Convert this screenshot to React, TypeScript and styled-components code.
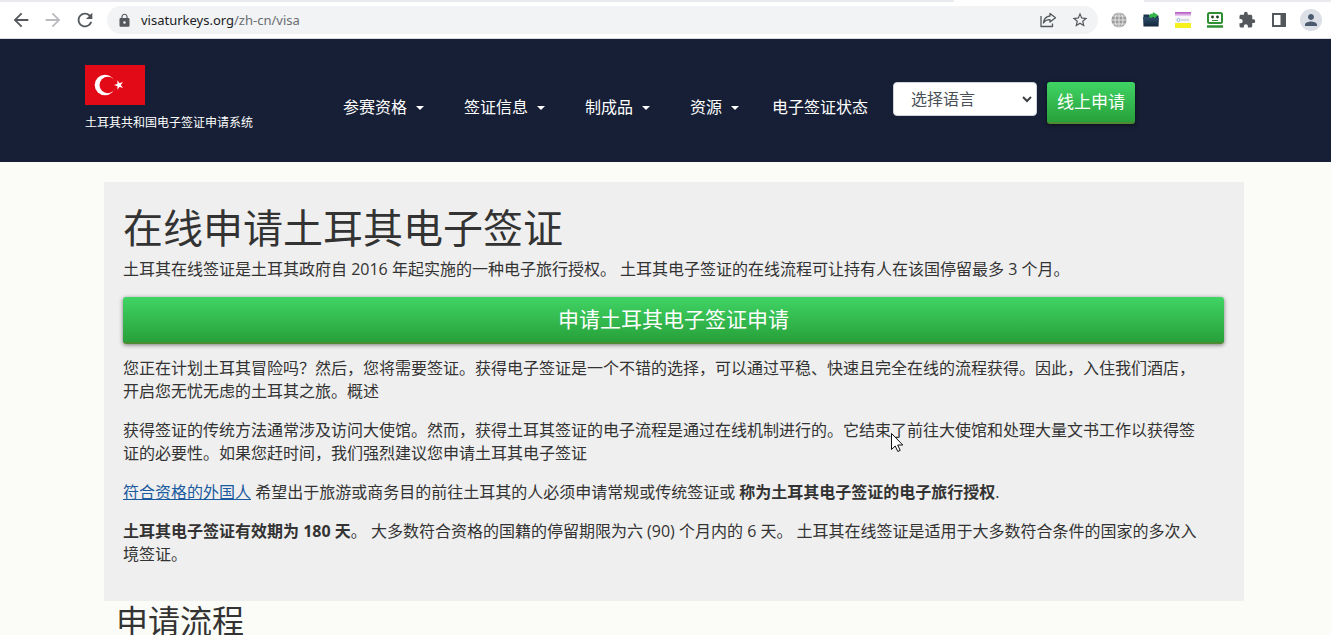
import React from "react";
import styled, { createGlobalStyle } from "styled-components";
import { MdArrowBack, MdArrowForward, MdExtension, MdLock, MdPerson, MdRefresh, MdStarBorder } from "react-icons/md";

const GlobalStyle = createGlobalStyle`
  *, *::before, *::after { box-sizing: border-box; }
  html, body { margin: 0; height: 100%; }
  #root { height: 100%; }
  body {
    background: #fbfcf8;
    color: #333;
    font: 16px/23px "Open Sans", "Noto Sans CJK SC", sans-serif;
    overflow: hidden;
  }
  h1, h2, p { margin: 0; font-weight: 400; }
`;

const Page = styled.div`
  position: relative;
  height: 100%;
  overflow: hidden;
`;

const TabStrip = styled.div`
  display: grid;
  grid-template-columns: 954fr 190fr 187fr;
  height: 2px;
  background: #e8eaed;
`;

const ActiveTab = styled.div`
  grid-column: 2;
  background: #fff;
`;

const Toolbar = styled.div`
  display: flex;
  align-items: center;
  height: 37px;
  padding: 0 4px 0 10px;
  background: #fff;
  border-bottom: 1px solid #dadce0;
`;

const IconButton = styled.button<{ $muted?: boolean }>`
  display: grid;
  place-items: center;
  width: 32px;
  height: 28px;
  flex: none;
  padding: 0;
  border: 0;
  background: none;
  color: ${(p) => (p.$muted ? "#b9bbbe" : "#54575b")};
`;

const NavButtons = styled.div`
  display: flex;
  margin-left: -5px;
`;

const AddressBar = styled.div`
  display: flex;
  align-items: center;
  flex: 1;
  height: 28px;
  margin: 0 5px 0 6px;
  padding: 0 2px 0 10px;
  border-radius: 14px;
  background: #f1f3f4;
  color: #55585c;
`;

const Url = styled.a`
  flex: 1;
  margin-left: 9px;
  color: #6a6d71;
  font-family: "Noto Sans", sans-serif;
  font-size: 13px;
  line-height: 20px;
  text-decoration: none;
  span { color: #202124; }
`;

const Avatar = styled.span`
  display: grid;
  place-items: center;
  width: 22px;
  height: 22px;
  border-radius: 50%;
  background: #dcdfe6;
  color: #4c5a70;
`;

const SiteHeader = styled.header`
  display: flex;
  align-items: flex-start;
  height: 123px;
  padding: 26px 85px 0;
  background: #161f36;
  color: #fff;
`;

const Brand = styled.a`
  display: flex;
  flex-direction: column;
  gap: 9px;
  width: 258px;
  flex: none;
  color: #fff;
  font-size: 12px;
  line-height: 18px;
  text-decoration: none;
  svg { display: block; }
`;

const Menu = styled.nav`
  display: flex;
  gap: 40px;
  margin-top: 31px;
`;

const MenuButton = styled.button`
  display: flex;
  align-items: center;
  gap: 9px;
  padding: 0;
  border: 0;
  background: none;
  color: #fff;
  font: inherit;
  white-space: nowrap;
  &::after {
    content: "";
    border: 4px solid transparent;
    border-top-color: #fff;
    border-bottom: 0;
  }
`;

const MenuLink = styled.a`
  margin-left: -7px;
  color: #fff;
  text-decoration: none;
  white-space: nowrap;
`;

const Actions = styled.div`
  display: flex;
  align-items: flex-start;
  gap: 10px;
  margin: 17px 0 0 25px;
`;

const SelectBox = styled.div`
  position: relative;
  svg {
    position: absolute;
    top: 14px;
    right: 5px;
    pointer-events: none;
  }
`;

const LanguageSelect = styled.select`
  appearance: none;
  display: block;
  width: 144px;
  height: 34px;
  padding: 0 24px 0 17px;
  border: 1px solid #ced4da;
  border-radius: 4px;
  background: #fff;
  color: #495057;
  font: inherit;
`;

const GreenLink = styled.a<{ $large?: boolean }>`
  display: block;
  padding: ${(p) => (p.$large ? "11px" : "9px 10px 10px")};
  border-bottom: 2px solid #4d8a31;
  border-radius: 3px;
  background: linear-gradient(#40d465, #28a03a);
  box-shadow: 0 1px 4px rgba(0, 0, 0, 0.5);
  color: #fff;
  font-size: ${(p) => (p.$large ? "21px" : "17px")};
  line-height: ${(p) => (p.$large ? "23px" : "21px")};
  text-align: center;
  text-decoration: none;
  white-space: nowrap;
`;

const Main = styled.main`
  padding: 20px 87px 0 104px;
`;

const Card = styled.section`
  padding: 20px 20px 35px 19px;
  background: #efefef;
`;

const Title = styled.h1`
  margin-bottom: 4px;
  font-size: 40px;
  line-height: 52px;
`;

const Intro = styled.div`
  margin-bottom: 16px;
`;

const Article = styled.div`
  display: flex;
  flex-direction: column;
  gap: 16px;
  margin-top: 13px;
`;

const Paragraph = styled.p`
  padding-right: 16px;
  a { color: #1a5a9e; }
  b { font-weight: 700; }
`;

const SectionTitle = styled.h2`
  padding-left: 12px;
  font-size: 32px;
  line-height: 40px;
`;

const Pointer = styled.svg`
  position: absolute;
  left: 890px;
  top: 432px;
`;

const ShareIcon = () => (
  <svg width="18" height="18" viewBox="0 0 18 18" fill="none" stroke="#54575b" strokeWidth="1.3" strokeLinejoin="round">
    <path d="M2 5v10.500h11.500V12.500" />
    <path d="M11 2.500l5.500 4.300-5.500 4.300V8.700C8 8.600 6 9.600 4.500 12c.4-4 2.700-6.600 6.500-7z" />
  </svg>
);

const GlobeIcon = () => (
  <svg width="16" height="16" viewBox="0 0 16 16">
    <circle cx="8" cy="8" r="7.600" fill="#9c9c9c" />
    <g fill="none" stroke="#f2f2f2" strokeWidth="0.800">
      <path d="M8 0v16M0 8h16M1.500 4h13M1.500 12h13" />
      <ellipse cx="8" cy="8" rx="4" ry="7.600" />
    </g>
  </svg>
);

const FolderIcon = () => (
  <svg width="16" height="16" viewBox="0 0 16 16">
    <defs>
      <linearGradient id="folder" x2="0" y2="1">
        <stop stopColor="#31506e" />
        <stop offset="1" stopColor="#14253b" />
      </linearGradient>
    </defs>
    <path d="M0.500 2.500h5.500l1 1h8.500V7H0.500z" fill="#1d344d" />
    <path d="M6 5c0-2.500 1.500-3.500 4-3.500V0L15 3l-4 4V5C9.500 4.800 8.500 5.500 8 7z" fill="#35b54a" />
    <path d="M0 5h6.500L8 6h8l-0.500 8.500H0.500z" fill="url(#folder)" />
  </svg>
);

const NoteIcon = () => (
  <svg width="16" height="16" viewBox="0 0 16 16">
    <defs>
      <linearGradient id="noteTop" x2="0" y2="1">
        <stop stopColor="#b14fc0" />
        <stop offset="1" stopColor="#efd8f3" />
      </linearGradient>
    </defs>
    <rect width="16" height="16" fill="#f7f5fa" />
    <rect width="16" height="4" fill="url(#noteTop)" />
    <rect y="11" width="16" height="5" fill="#f6f11c" />
    <circle cx="3.500" cy="8" r="1.500" fill="none" stroke="#8fb4dc" />
    <path d="M6 8h8" stroke="#a9b9cf" />
  </svg>
);

const RobotIcon = () => (
  <svg width="18" height="16" viewBox="0 0 18 16">
    <rect x="2" y="1" width="14" height="10" rx="1.500" fill="#fff" stroke="#2e8f32" strokeWidth="2" />
    <circle cx="6.500" cy="5" r="1.400" fill="#1d3b1f" />
    <circle cx="11.500" cy="5" r="1.400" fill="#1d3b1f" />
    <path d="M6 8.500h6" stroke="#2e8f32" />
    <path d="M1 14.500h16" stroke="#2e8f32" strokeWidth="2.500" />
  </svg>
);

const PanelIcon = () => (
  <svg width="14" height="14" viewBox="0 0 14 14">
    <path d="M0 0h14v14H0zM2 2v10h6.500V2z" fill="#54575b" fillRule="evenodd" />
  </svg>
);

const Flag = () => (
  <svg width="60" height="40" viewBox="0 0 60 40" role="img" aria-label="土耳其国旗">
    <rect width="60" height="40" fill="#e30a17" />
    <circle cx="20" cy="20" r="10.300" fill="#fff" />
    <circle cx="22.800" cy="20" r="8.300" fill="#e30a17" />
    <path d="M29 20l9-2.900-5.600 7.600v-9.400l5.600 7.600z" fill="#fff" />
  </svg>
);

const menus = ["参赛资格", "签证信息", "制成品", "资源"];

export default function App() {
  return (
    <Page lang="zh-CN">
      <GlobalStyle />
      <TabStrip><ActiveTab /></TabStrip>
      <Toolbar>
        <NavButtons>
          <IconButton aria-label="后退"><MdArrowBack size={22} /></IconButton>
          <IconButton aria-label="前进" $muted><MdArrowForward size={22} /></IconButton>
          <IconButton aria-label="重新加载"><MdRefresh size={22} /></IconButton>
        </NavButtons>
        <AddressBar>
          <MdLock size={15} />
          <Url href="#visa"><span>visaturkeys.org</span>/zh-cn/visa</Url>
          <IconButton aria-label="分享"><ShareIcon /></IconButton>
          <IconButton aria-label="收藏"><MdStarBorder size={18} /></IconButton>
        </AddressBar>
        <IconButton aria-label="网络"><GlobeIcon /></IconButton>
        <IconButton aria-label="文件夹"><FolderIcon /></IconButton>
        <IconButton aria-label="便笺"><NoteIcon /></IconButton>
        <IconButton aria-label="密码管理"><RobotIcon /></IconButton>
        <IconButton aria-label="扩展程序"><MdExtension size={18} /></IconButton>
        <IconButton aria-label="侧边栏"><PanelIcon /></IconButton>
        <IconButton aria-label="用户"><Avatar><MdPerson size={18} /></Avatar></IconButton>
      </Toolbar>
      <SiteHeader>
        <Brand href="#home"><Flag />土耳其共和国电子签证申请系统</Brand>
        <Menu>
          {menus.map((label) => <MenuButton key={label}>{label}</MenuButton>)}
          <MenuLink href="#status">电子签证状态</MenuLink>
        </Menu>
        <Actions>
          <SelectBox>
            <LanguageSelect aria-label="选择语言"><option>选择语言</option></LanguageSelect>
            <svg width="10" height="7" viewBox="0 0 10 7" fill="none" stroke="#3c4043" strokeWidth="2">
              <path d="M1 1l4 4 4-4" />
            </svg>
          </SelectBox>
          <GreenLink href="#apply">线上申请</GreenLink>
        </Actions>
      </SiteHeader>
      <Main>
        <Card>
          <Intro>
            <Title>在线申请土耳其电子签证</Title>
            <Paragraph>土耳其在线签证是土耳其政府自 2016 年起实施的一种电子旅行授权。 土耳其电子签证的在线流程可让持有人在该国停留最多 3 个月。</Paragraph>
          </Intro>
          <GreenLink $large href="#apply">申请土耳其电子签证申请</GreenLink>
          <Article>
            <Paragraph>您正在计划土耳其冒险吗？然后，您将需要签证。获得电子签证是一个不错的选择，可以通过平稳、快速且完全在线的流程获得。因此，入住我们酒店，开启您无忧无虑的土耳其之旅。概述</Paragraph>
            <Paragraph>获得签证的传统方法通常涉及访问大使馆。然而，获得土耳其签证的电子流程是通过在线机制进行的。它结束了前往大使馆和处理大量文书工作以获得签证的必要性。如果您赶时间，我们强烈建议您申请土耳其电子签证</Paragraph>
            <Paragraph><a href="#eligible">符合资格的外国人</a> 希望出于旅游或商务目的前往土耳其的人必须申请常规或传统签证或 <b>称为土耳其电子签证的电子旅行授权</b>.</Paragraph>
            <Paragraph><b>土耳其电子签证有效期为 180 天</b>。 大多数符合资格的国籍的停留期限为六 (90) 个月内的 6 天。 土耳其在线签证是适用于大多数符合条件的国家的多次入境签证。</Paragraph>
          </Article>
        </Card>
        <SectionTitle>申请流程</SectionTitle>
      </Main>
      <Pointer width="14" height="21" viewBox="0 0 14 21" aria-hidden="true">
        <path d="M1.500 1.500v16l3.700-3.500 2.600 5.500 2.400-1.100-2.500-5.400h5.100z" fill="#fff" stroke="#111" />
      </Pointer>
    </Page>
  );
}
